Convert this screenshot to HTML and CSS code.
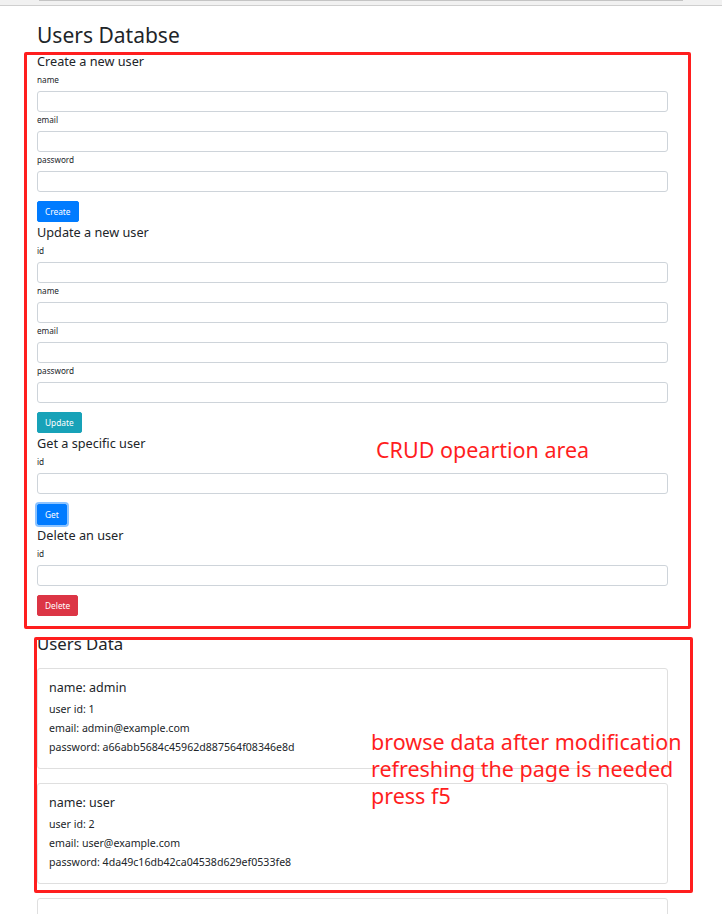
FILE: index.html
```html
<!DOCTYPE html>
<html>
<head>
<meta charset="utf-8">
<title>Users Databse</title>
<link rel="stylesheet" href="styles.css">
</head>
<body>
<div class="topbar"><div class="scrollthumb"></div></div>
<div class="page">
  <h1 class="title">Users Databse</h1>

  <section class="crud">
    <h2 class="sec-title">Create a new user</h2>
    <div class="group"><label class="lbl">name</label><input class="field" type="text"></div>
    <div class="group"><label class="lbl">email</label><input class="field" type="text"></div>
    <div class="group"><label class="lbl">password</label><input class="field" type="text"></div>
    <button class="btn btn-primary">Create</button>

    <h2 class="sec-title">Update a new user</h2>
    <div class="group"><label class="lbl">id</label><input class="field" type="text"></div>
    <div class="group"><label class="lbl">name</label><input class="field" type="text"></div>
    <div class="group"><label class="lbl">email</label><input class="field" type="text"></div>
    <div class="group"><label class="lbl">password</label><input class="field" type="text"></div>
    <button class="btn btn-info">Update</button>

    <h2 class="sec-title">Get a specific user</h2>
    <div class="group"><label class="lbl">id</label><input class="field" type="text"></div>
    <button class="btn btn-primary btn-focus">Get</button>

    <h2 class="sec-title">Delete an user</h2>
    <div class="group"><label class="lbl">id</label><input class="field" type="text"></div>
    <button class="btn btn-danger">Delete</button>
  </section>

  <section class="data">
    <h2 class="data-title">Users Data</h2>
    <div class="card">
      <div class="card-name">name: admin</div>
      <div class="card-line">user id: 1</div>
      <div class="card-line">email: admin@example.com</div>
      <div class="card-line">password: a66abb5684c45962d887564f08346e8d</div>
    </div>
    <div class="card">
      <div class="card-name">name: user</div>
      <div class="card-line">user id: 2</div>
      <div class="card-line">email: user@example.com</div>
      <div class="card-line">password: 4da49c16db42ca04538d629ef0533fe8</div>
    </div>
    <div class="card card-empty"></div>
  </section>
</div>

<div class="note-box note-crud"></div>
<div class="note-box note-data"></div>
<div class="note-text note-text-crud">CRUD opeartion area</div>
<div class="note-text note-text-data">browse data after modification<br>refreshing the page is needed<br>press f5</div>
</body>
</html>
```

FILE: styles.css
```css
html, body {
  margin: 0;
  padding: 0;
  overflow: hidden;
  background: #ffffff;
}

body {
  font-family: "Noto Sans", "Open Sans", sans-serif;
  color: #212529;
  position: relative;
  height: 914px;
}

.topbar {
  height: 5px;
  background: #f1f1f1;
  border-bottom: 1px solid #cfcfcf;
}

.scrollthumb {
  margin-left: 39px;
  width: 644px;
  height: 1px;
  background: #c4c4c4;
}

.page {
  width: 631px;
  margin-left: 37px;
}

.title {
  font-size: 21px;
  font-weight: 400;
  line-height: 32px;
  margin: 13px 0 0 0;
}

.sec-title {
  font-size: 12.7px;
  font-weight: 400;
  line-height: 21px;
  margin: 0;
}

.group {
  display: flex;
  flex-direction: column;
}

.lbl {
  font-size: 8.2px;
  line-height: 12px;
  margin: 2px 0 5px 0;
}

.field {
  box-sizing: border-box;
  height: 21px;
  width: 631px;
  border: 1px solid #ced4da;
  border-radius: 3px;
  margin: 0;
  padding: 0 6px;
  background: #fff;
}

.btn {
  display: block;
  box-sizing: border-box;
  height: 21px;
  margin: 9px 0 0 0;
  padding: 0 7px;
  border: 1px solid transparent;
  border-radius: 2px;
  color: #fff;
  font-family: "Noto Sans", "Open Sans", sans-serif;
  font-size: 8.3px;
  line-height: 19px;
}

.btn-primary { background: #007bff; border-color: #007bff; }
.btn-info { background: #17a2b8; border-color: #17a2b8; }
.btn-danger { background: #dc3545; border-color: #dc3545; }
.btn-focus {
  margin-top: 10px;
  box-shadow: 0 0 0 2px rgba(0, 123, 255, 0.45);
}

.data-title {
  font-size: 16.8px;
  font-weight: 400;
  line-height: 20px;
  margin: 18px 0 0 0;
}

.card {
  box-sizing: border-box;
  border: 1px solid #dfdfdf;
  border-radius: 3px;
  padding: 9px 11px 12px 11px;
  margin-top: 14px;
  height: 101px;
}

.card-name {
  font-size: 12.5px;
  line-height: 20px;
  margin-bottom: 2px;
}

.card-line {
  font-size: 10.6px;
  line-height: 19px;
}

.note-box {
  position: absolute;
  box-sizing: border-box;
  border: 3px solid #ff1e1e;
  border-radius: 2px;
}

.note-crud { left: 24px; top: 52px; width: 667px; height: 577px; }
.note-data { left: 34px; top: 637px; width: 659px; height: 256px; }

.note-text {
  position: absolute;
  color: #ff1e1e;
  font-family: "Noto Sans", "Open Sans", sans-serif;
  font-size: 21.5px;
  line-height: 27px;
}

.note-text-crud { left: 376px; top: 436px; }
.note-text-data { left: 371px; top: 728px; }
```
